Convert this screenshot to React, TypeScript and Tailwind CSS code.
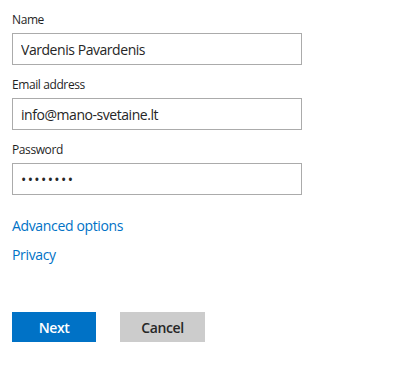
import React from "react";

function Field({ label, value, type = "text" }: { label: string; value: string; type?: string }) {
  const spacing = type === "password" ? "tracking-[1.4px]" : "tracking-[-0.45px]";
  return (
    <div className="flex flex-col">
      <label className="text-[12px] leading-4 tracking-[-0.4px] text-[#1f1f1f]">{label}</label>
      <input
        type={type}
        defaultValue={value}
        readOnly
        className={`mt-[5px] h-8 w-[290px] border border-[#ababab] bg-white px-2 text-[14px] text-[#262626] outline-none ${spacing}`}
      />
    </div>
  );
}

export default function App() {
  return (
    <div className="min-h-[366px] w-[415px] bg-white px-3 pt-3 font-['Open_Sans',sans-serif]">
      <div className="flex flex-col gap-3">
        <Field label="Name" value="Vardenis Pavardenis" />
        <Field label="Email address" value="info@mano-svetaine.lt" />
        <Field label="Password" value="password" type="password" />
      </div>
      <div className="mt-[21px] flex flex-col items-start gap-[9px] text-[14px] leading-5 tracking-[-0.35px] text-[#0072c6]">
        <a href="#">Advanced options</a>
        <a href="#">Privacy</a>
      </div>
      <div className="mt-[47px] flex gap-6">
        <button className="h-[30px] w-[84px] bg-[#0072c6] text-[14px] font-semibold tracking-[-0.4px] text-white">Next</button>
        <button className="h-[30px] w-[85px] bg-[#cccccc] text-[14px] font-semibold tracking-[-0.4px] text-[#262626]">Cancel</button>
      </div>
    </div>
  );
}
